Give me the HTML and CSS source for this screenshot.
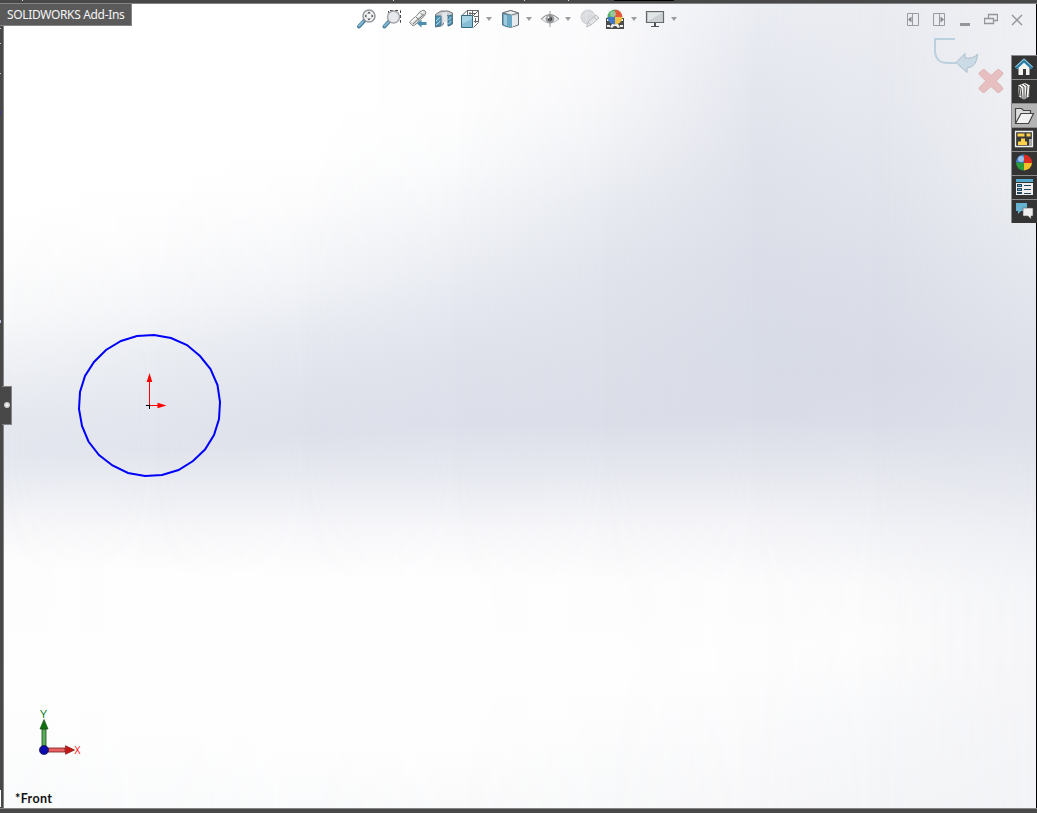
FILE: index.html
```
<!DOCTYPE html>
<html lang="en">
<head>
<meta charset="utf-8">
<title>SOLIDWORKS</title>
<link rel="stylesheet" href="styles.css">
</head>
<body>
<div class="app">
  <div class="top-edge"><i class="tick t1"></i><i class="tick t2"></i><i class="tick t3"></i><i class="tick t4"></i><i class="tick-dark"></i></div>
  <div class="workspace">
    <div class="left-edge"></div>
    <main class="viewport">
      <div class="shade s0"></div><div class="shade s1"></div><div class="shade s2"></div><div class="shade s3"></div><div class="shade s4"></div><div class="shade s5"></div><div class="shade s6"></div><div class="shade s7"></div>

      <header class="bar">
        <nav class="view-tools">
          <svg class="ico" viewBox="0 0 20 20"><path d="M3 17.500L8 12" stroke="#467b98" stroke-width="4" stroke-linecap="round"/><path d="M3 17L7 12.500" stroke="#83b6d0" stroke-width="2" stroke-linecap="round"/><circle cx="13" cy="7" r="6" fill="#f3f5f7" stroke="#949699" stroke-width="1.500"/><path d="M13 2.500l1.800 2h-3.600zM13 11.500l1.800-2h-3.600zM8.500 7l2-1.800v3.600zM17.500 7l-2-1.800v3.600z" fill="#4a4a4a"/></svg>
          <svg class="ico" viewBox="0 0 20 20"><path d="M6.500 5V1.500h12v12H16" fill="none" stroke="#444" stroke-dasharray="3 2"/><path d="M2.500 17.500L7 12.500" stroke="#467b98" stroke-width="4" stroke-linecap="round"/><path d="M2.500 17L6 13.500" stroke="#83b6d0" stroke-width="2" stroke-linecap="round"/><circle cx="11.500" cy="8" r="6" fill="#e6eaed" stroke="#a4a6a9" stroke-width="1.500"/></svg>
          <svg class="ico" viewBox="0 0 20 20"><path d="M1.500 13.500l3.500 3.500 4.500-3 2-3 5-4 1.500-4-2-2-4 1.500-4 5-3 2z" fill="#d8dadc" stroke="#8b8d8f"/><path d="M3.500 13l5-4.500 6.500-6" stroke="#fff" stroke-width="1.500"/><path d="M5 15l5-4.500 6-5M8 8l3 3M12 3.500l3 3" stroke="#77797b" fill="none"/><path d="M9 14.500l4.500-4v2.500h5v3h-5v2.500z" fill="#4a8dac"/></svg>
          <svg class="ico" viewBox="0 0 20 20"><path d="M1.500 5.500L7 2h7l4.500 2v11l-4 2V7l-2-1-3 2v7l-2 2-6 1z" fill="#c9ccd0" stroke="#74777a"/><path d="M1.500 7h5.500v9l-5.500 1.500zM14 7l4-1v9l-4 2z" fill="#5396b4" stroke="#3f7390"/><path d="M2 12l4.500-4M2 16l4.500-4M14.500 11l3-3M14.500 15l3-3" stroke="#b5dbe9"/><path d="M8 4l5-1v10l-4 1z" fill="#e4e6e8"/></svg>
          <svg class="ico" viewBox="0 0 20 20"><path d="M2 6.500l5-5h11.500v12l-5 5M7.500 2v4M18 2l-5 5M12.500 2v4M14 7.500h4M14 12.500h4M10 3v3M9 4.500h6M15.500 9v5" fill="none" stroke="#666"/><path d="M1.500 6.500h11v12h-11z" fill="#87bdd4" stroke="#356a83"/><path d="M2 7h10v3L2 15z" fill="#b9e0ec" opacity=".65"/></svg>
          <i class="caret"></i>
          <svg class="ico ml9" viewBox="0 0 20 20"><path d="M1.500 4l8-2.500 8 2.500v12l-8 2.500-8-2.500z" fill="#dce0e4" stroke="#65696c"/><path d="M1.500 4l8-2.500 8 2.500-7 2z" fill="#edf0f2" stroke="#73777a"/><path d="M2 4.500l5 1.500v12l-5-2z" fill="#9dcce0" stroke="#477e98"/><path d="M7 6h4v12H7z" fill="#69a9c5"/><path d="M11 7h6v8l-6 3z" fill="#e8ebed"/></svg>
          <i class="caret c2"></i>
          <svg class="ico ml8" viewBox="0 0 20 20"><path d="M1 10Q10 1 19 10Q10 18 1 10z" fill="#e9eaeb" stroke="#b8babb"/><path d="M1 10Q10 1 19 10" fill="none" stroke="#929495"/><circle cx="10" cy="10" r="4.300" fill="#999d9e"/><circle cx="10" cy="10" r="2.200" fill="#444"/><circle cx="8.500" cy="8.500" r="1" fill="#fff"/><path d="M10 2v16" stroke="#888" stroke-width=".8"/></svg>
          <i class="caret c3"></i>
          <svg class="ico ml9" viewBox="0 0 20 20"><circle cx="8" cy="8" r="7" fill="#d9dadd" stroke="#cccdd0"/><path d="M2 8q5-6 12-2M8 1q-4 6 0 14" fill="none" stroke="#e6e7ea"/><path d="M6.500 18l1.500-5 8-7 3 3-8 7z" fill="#e4e5e7" stroke="#bbbdc0"/><path d="M8 13l3 3M14 8l3 3" stroke="#bbbdc0"/></svg>
          <svg class="ico mln" viewBox="0 0 20 20"><path d="M1 9h18v11H1z" fill="#4c4c4c"/><path d="M2 10h2v2H2zM16 10h2v2h-2zM2 16h3v2H2zM15 16h3v2h-3zM5 18l2-3h6l2 3-2 1-2-2H9l-2 2z" fill="#f0f0f0"/><path d="M10 .5A7.500 7.500 0 0 0 2.500 9l7.500-1z" fill="#55ac63"/><path d="M10 .5A7.500 7.500 0 0 1 17.500 8L10 8z" fill="#e2593c"/><path d="M2.500 8H10v7.500A7.500 7.500 0 0 1 2.500 8z" fill="#4279c4"/><path d="M10 8h7.500a7.500 7.500 0 0 1-7.500 7.500z" fill="#eebf42"/><circle cx="8" cy="5" r="3" fill="#fff" opacity=".35"/></svg>
          <i class="caret c4"></i>
          <svg class="ico ml8" viewBox="0 0 20 20"><path d="M1.500 2.500h17v11h-17z" fill="#cbd0d3" stroke="#66686a" stroke-width="1.200"/><path d="M3 12V4h14z" fill="#e2e5e6"/><path d="M9 14h2v3h3v1H6v-1h3z" fill="#505356"/></svg>
          <i class="caret c5"></i>
        </nav>
        <div class="win-tools">
          <svg viewBox="0 0 14 14"><path d="M1.500.5h11v12h-11zM6.500 1v11" fill="none" stroke="#999ba0"/><path d="M5.500 3.500v6L2 6.500z" fill="#85878b"/></svg>
          <svg viewBox="0 0 14 14"><path d="M1.500.5h11v12h-11zM7.500 1v11" fill="none" stroke="#999ba0"/><path d="M8.500 3.500v6L12 6.500z" fill="#85878b"/></svg>
          <svg viewBox="0 0 14 14"><path d="M2 10h10v3H2z" fill="#939599"/></svg>
          <svg viewBox="0 0 14 14"><path d="M4.500 5V1.500h9v6h-4M.5 5.500h9v5h-9z" fill="none" stroke="#939599" stroke-width="1.300"/></svg>
          <svg viewBox="0 0 14 14"><path d="M2 2l10 10M12 2L2 12" stroke="#939599" stroke-width="1.400"/></svg>
        </div>
      </header>

      <svg class="confirm" viewBox="930 34 80 64"><path d="M955 39H935V52Q936 63 948 63H956" fill="none" stroke="#bcd0df" stroke-width="2"/><path d="M956 62.500L965 53.500v4.500q9 1 12.500-4-.5 13-10.500 14v4.500z" fill="#cbdbe5" stroke="#a9bdcb"/><path d="M979 73l4-3.500q2 0 3 1.500l5 4.500 5-4.500q1-1.500 3-1.500l4 3.500q0 2-7 8 7 6 7 8l-4 3.500q-2 0-3-1.500l-5-4.500-5 4.500q-1 1.500-3 1.500l-4-3.500q0-2 7-8-7-6-7-8z" fill="#e8bfc1" stroke="#dfb4b6" stroke-linejoin="round"/></svg>

      <svg class="sketch" viewBox="74 330 152 152"><path d="M137 336L154 335 171 338 187 345 200 356 210.500 369 217.500 385 220 402 219 419 214 435 205 449.500 193 461 178.500 470 162 475 145 476 128 473 112.500 465.500 99 455 88.500 441.500 82 426 79 409 80 392 85 376 94 362 106 350 121 341Z" fill="none" stroke="#0000fa" stroke-width="2"/><path d="M146 405.500h7M149.500 402v7" stroke="#000"/><path d="M149.500 405V378M150 405.500h10" stroke="#f00"/><path d="M149.500 373l2.800 9h-5.600zM166.500 405.500l-9-2.800v5.600z" fill="#f00"/></svg>

      <svg class="triad" viewBox="34 706 50 52"><path d="M42 729h4v20h-4z" fill="#5bae5b" stroke="#174d17" stroke-width=".8"/><path d="M44 719.500l4 9.500h-8z" fill="#107010" stroke="#174d17" stroke-width=".7"/><path d="M46 748h19v4H46z" fill="#e76262" stroke="#801919" stroke-width=".8"/><path d="M74.500 750l-9-4.300v8.600z" fill="#c71414" stroke="#801919" stroke-width=".7"/><circle cx="44" cy="750" r="4.600" fill="#101090" stroke="#080850" stroke-width=".6"/><path d="M42 748h4l-4 4h4" fill="none" stroke="#0000f0"/><text x="40" y="717.500" textLength="7" lengthAdjust="spacingAndGlyphs" fill="#10801c">Y</text><text x="74.500" y="754" textLength="6" lengthAdjust="spacingAndGlyphs" fill="#f11">X</text></svg>
      <div class="view-name">*Front</div>
      <div class="tooltip">SOLIDWORKS Add-Ins</div>
      <div class="handle"></div>
    </main>
    <div class="right-edge"></div>
  </div>
  <div class="bottom-edge"></div>
  <i class="mark m1"></i><i class="mark m2"></i><i class="mark m3"></i><i class="mark m4"></i><i class="mark m5"></i><i class="mark m6"></i>

  <aside class="task-pane">
    <div class="tab"><svg viewBox="0 0 24 23"><path d="M6.500 11v8h11v-8L12 5.500z" fill="#f3f3ef"/><path d="M11 13h3v6h-3z" fill="#363636"/><path d="M4 12l8-7.500 8 7.500" fill="none" stroke="#93cce5" stroke-width="3.200"/><path d="M4 12.500L12 5l8 7.500" fill="none" stroke="#24789f" stroke-width="2"/></svg></div>
    <div class="tab"><svg viewBox="0 0 24 23"><path d="M6 5.500L13 3l5 2.500-1 11-5 3-5-3z" fill="#f1f1ee"/><path d="M6 6l3 2 1 10M9 5l3 2v12M12 4l3 2-1 12M7 7l1 9M18 6l-1 10" fill="none" stroke="#444"/></svg></div>
    <div class="tab active"><svg viewBox="0 0 24 23"><path d="M3.500 19V4.500h6l2 2h7V9" fill="#ddd" stroke="#454545" stroke-width="1.200"/><path d="M3.500 19.500L9 9.500h12.500l-5 10z" fill="#f3f3f3" stroke="#454545" stroke-width="1.200"/></svg></div>
    <div class="tab"><svg viewBox="0 0 24 23"><path d="M3.500 3.500h17v15h-17z" fill="#383838" stroke="#eee" stroke-width="1.300"/><path d="M5.500 5.500h7v3h-7zM14.500 5.500h4v3h-4zM9 10.500h4v3h2v3.500H6v-3.500h3z" fill="#ffd04a"/><path d="M17 11h3v7h-3z" fill="#aaa"/></svg></div>
    <div class="tab"><svg viewBox="0 0 24 23"><path d="M12 2.500a8 8 0 0 0-8 8l8 .5z" fill="#3c82cf"/><path d="M12 2.500a8 8 0 0 1 8 8.500l-8 0z" fill="#d92d22"/><path d="M4 10.500l8 .5v7.500a8 8 0 0 1-8-8z" fill="#2c9d3c"/><path d="M12 11h8a8 8 0 0 1-8 7.500z" fill="#efc12c"/><circle cx="9" cy="7" r="3" fill="#fff" opacity=".5"/></svg></div>
    <div class="tab"><svg viewBox="0 0 24 23"><path d="M4 3h17v16H4z" fill="#eee"/><path d="M4 3h17v3H4z" fill="#50a8cc"/><path d="M4 6h17v1H4z" fill="#333"/><path d="M5 8h5v3H5zM5 12h5v3H5zM5 16h5v2H5zM12 9h7v1h-7zM12 13h7v1h-7zM12 17h7v1h-7z" fill="#24465a"/><path d="M6 9h3v1H6zM6 13h3v1H6z" fill="#67b2d0"/></svg></div>
    <div class="tab"><svg viewBox="0 0 24 23"><path d="M4 3h11v8H9l-3 3v-3H4z" fill="#67b2d0"/><path d="M11 8h10v8h-2v3l-3-3h-5z" fill="#eee" stroke="#555" stroke-width=".6"/></svg></div>
  </aside>
</div>
</body>
</html>
```
FILE: styles.css
```
* { box-sizing: border-box; }
body { margin: 0; overflow: hidden; }
.app { position: relative; width: 1037px; height: 813px; display: flex; flex-direction: column; background: #484848; }
.top-edge { position: relative; flex: 0 0 4px; background: #484848; border-bottom: 1px solid #858585; }
.tick { position: absolute; top: 0; width: 1px; height: 1px; background: #ddd; }
.t1 { left: 22px; } .t2 { left: 393px; } .t3 { left: 524px; } .t4 { left: 568px; }
.tick-dark { position: absolute; left: 614px; top: 0; width: 60px; height: 1px; background: #000; }
.workspace { flex: 1; display: flex; min-height: 0; }
.left-edge { flex: 0 0 4px; background: #484848; border-right: 1px solid #858585; }
.right-edge { flex: 0 0 1px; background: #000; }
.bottom-edge { flex: 0 0 5px; background: #484848; border-top: 1px solid #858585; }
.viewport { position: relative; flex: 1; background: #fff; }

/* Backdrop: vertical ramps cross-faded from left to right */
.shade { position: absolute; inset: 0; }
.s0 { background: linear-gradient(#fff 0, #fff 200px, #fdfdfd 250px, #f8f9fa 310px, #eef0f5 365px, #e5e8ef 415px, #e4e7ef 450px, #ebedf3 480px, #f7f7fa 520px, #fdfdfd 560px, #fefefe 690px, #fafbfc 804px); }
.s1 { background: linear-gradient(#fff 0, #fff 180px, #fcfcfd 240px, #f5f6f9 300px, #eaedf2 350px, #e3e6ee 410px, #e1e4ec 445px, #eaecf2 480px, #f7f7f9 525px, #fefefe 570px, #fefefe 720px, #fafbfc 804px);
  mask-image: linear-gradient(90deg, transparent 0, #000 150px); }
.s2 { background: linear-gradient(#fff 0, #fff 145px, #fcfcfd 200px, #f2f4f7 275px, #e7eaf1 330px, #e0e3ec 385px, #dee0ea 430px, #eaecf2 480px, #f7f7fa 525px, #fefefe 575px, #fefefe 740px, #fafbfc 804px);
  mask-image: linear-gradient(90deg, transparent 150px, #000 300px); }
.s3 { background: linear-gradient(#fefefe 0, #fefefe 100px, #fafbfc 160px, #eff1f5 235px, #e5e8f0 300px, #dfe1eb 360px, #dddfea 420px, #e8eaf1 475px, #f7f7fa 525px, #fefefe 575px, #fefefe 740px, #fafafb 804px);
  mask-image: linear-gradient(90deg, transparent 300px, #000 450px); }
.s4 { background: linear-gradient(#fbfbfd 0, #f9f9fb 70px, #f3f4f7 130px, #e8ebf1 200px, #e1e4ec 270px, #dddfe9 360px, #dbdee8 420px, #e7e9f0 470px, #f6f6f9 525px, #fdfdfd 580px, #fefefe 680px, #f8f9fa 804px);
  mask-image: linear-gradient(90deg, transparent 450px, #000 600px); }
.s5 { background: linear-gradient(#ebedf3 0, #e5e7ef 80px, #e0e2eb 170px, #dbdee8 260px, #d8dce6 350px, #d9dce7 410px, #e5e7ee 465px, #f4f4f8 520px, #fcfcfd 580px, #fdfdfe 660px, #f7f7f9 804px);
  mask-image: linear-gradient(90deg, transparent 600px, #000 750px); }
.s6 { background: linear-gradient(#eaecf1 0, #e7e9f0 80px, #e1e4ec 180px, #dbdee8 280px, #d8dbe6 370px, #dbdde8 420px, #e5e7ee 465px, #f1f2f6 525px, #fafafb 580px, #fcfcfc 640px, #f7f8fa 720px, #f4f5f7 804px);
  mask-image: linear-gradient(90deg, transparent 750px, #000 870px); }
.s7 { background: linear-gradient(#eeeff3 0, #eff0f3 90px, #ebedf1 180px, #e3e6ed 280px, #dddfe9 370px, #dddfe9 420px, #e5e7ee 480px, #eeeff4 530px, #f4f5f8 590px, #f5f5f8 660px, #f2f3f6 804px);
  mask-image: linear-gradient(90deg, transparent 870px, #000 1032px); }

.bar { position: relative; display: flex; justify-content: space-between; padding: 5px 12px 0 352px; }
.view-tools { display: flex; align-items: center; height: 20px; }
.ico { width: 20px; height: 20px; margin-right: 6px; fill: none; flex: none; }
.caret { width: 0; height: 0; flex: none; border: 3px solid transparent; border-top: 4px solid #9b9da1; border-bottom: 0; }
.ml9 { margin-left: 9px; }
.ml8 { margin-left: 8px; }
.mln { margin-left: -1px; }
.c2, .c3 { margin-left: -1px; }
.win-tools { display: flex; gap: 12px; padding-top: 4px; }
.win-tools svg { width: 14px; height: 14px; }
.confirm { position: absolute; left: 926px; top: 30px; width: 80px; height: 64px; }
.sketch { position: absolute; left: 70px; top: 326px; width: 152px; height: 152px; }
.triad { position: absolute; left: 30px; top: 702px; width: 50px; height: 52px; font: 11px "Open Sans", sans-serif; }
.view-name { position: absolute; left: 11px; top: 786px; font: 700 12.5px/17px Lato, sans-serif; letter-spacing: .35px; color: #111; }
.tooltip { position: absolute; left: -4px; top: 0; width: 132px; height: 22px; padding-left: 7px; background: #5a5a5a; border: 1px solid #858585; border-left: 0; border-top: 0; color: #f5f5f5; font: 12px/22px "Noto Sans", sans-serif; letter-spacing: -.34px; white-space: nowrap; }
.handle { position: absolute; left: -2px; top: 382px; width: 10px; height: 39px; background: #484848; border: 1px solid #858585; border-left: 0; }
.handle::after { content: ""; position: absolute; left: 2px; top: 15px; width: 6px; height: 6px; border-radius: 50%; background: radial-gradient(#fff, #aaa); }
.mark { position: absolute; left: 0; width: 1px; height: 1px; background: #ccc; }
.m1 { top: 28px; } .m2 { top: 43px; } .m3 { top: 73px; }
.m4 { top: 110px; height: 5px; background: #39397c; }
.m5 { top: 320px; height: 3px; background: #bbbbdc; }
.m6 { top: 790px; height: 17px; background: #fff; }

.task-pane { position: absolute; left: 1011px; top: 55px; width: 26px; height: 168px; display: flex; flex-direction: column; gap: 1px; padding: 1px 0 1px 1px; background: #8b8b8b; }
.tab { flex: 1; background: #343434; }
.tab.active { background: #b4b4b4; }
.tab svg { display: block; width: 24px; height: 23px; }
```
